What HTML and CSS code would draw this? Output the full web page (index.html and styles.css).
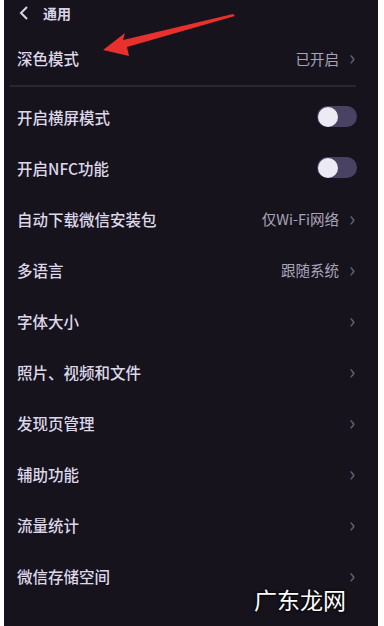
FILE: index.html
```html
<!DOCTYPE html>
<html lang="zh">
<head>
<meta charset="utf-8">
<link rel="stylesheet" href="styles.css">
</head>
<body>
<div class="screen">
  <div class="header">
    <svg class="back" width="10" height="14" viewBox="0 0 10 14"><path d="M8 1 L2 7 L8 13" fill="none" stroke="#d9d5e6" stroke-width="2"/></svg>
    <span class="title">通用</span>
  </div>
  <div class="row first">
    <span class="label">深色模式</span>
    <span class="value">已开启</span>
    <span class="chev">›</span>
  </div>
  <div class="sep"></div>
  <div class="row">
    <span class="label">开启横屏模式</span>
    <span class="toggle"><span class="knob"></span></span>
  </div>
  <div class="row">
    <span class="label">开启NFC功能</span>
    <span class="toggle"><span class="knob"></span></span>
  </div>
  <div class="row">
    <span class="label">自动下载微信安装包</span>
    <span class="value">仅Wi-Fi网络</span>
    <span class="chev">›</span>
  </div>
  <div class="row">
    <span class="label">多语言</span>
    <span class="value">跟随系统</span>
    <span class="chev">›</span>
  </div>
  <div class="row">
    <span class="label">字体大小</span>
    <span class="chev">›</span>
  </div>
  <div class="row">
    <span class="label">照片、视频和文件</span>
    <span class="chev">›</span>
  </div>
  <div class="row">
    <span class="label">发现页管理</span>
    <span class="chev">›</span>
  </div>
  <div class="row">
    <span class="label">辅助功能</span>
    <span class="chev">›</span>
  </div>
  <div class="row">
    <span class="label">流量统计</span>
    <span class="chev">›</span>
  </div>
  <div class="row">
    <span class="label">微信存储空间</span>
    <span class="chev">›</span>
  </div>
  <svg class="arrow" width="140" height="50" viewBox="0 0 140 50"><polygon points="0,36 22,19 20,26 130,0 132,2 24,33 26,42" fill="#e8302c"/></svg>
  <div class="watermark">广东龙网</div>
</div>
</body>
</html>
```
FILE: styles.css
```css
html, body {
  margin: 0;
  padding: 0;
  background: #ffffff;
}
body {
  font-family: "Noto Sans CJK SC", "Noto Sans", sans-serif;
}
.screen {
  position: relative;
  margin: 0 6px 0 4px;
  height: 626px;
  background: #17131d;
  overflow: hidden;
}
.header {
  height: 26px;
  display: flex;
  align-items: center;
  padding-left: 15px;
  gap: 14px;
  margin-bottom: 6px;
}
.back {
  display: block;
}
.title {
  color: #d9d5e6;
  font-size: 14px;
  font-weight: 700;
}
.row {
  height: 51px;
  display: flex;
  align-items: center;
  padding: 0 21px 0 13px;
}
.row.first {
  height: 52px;
}
.label {
  flex: 1;
  color: #dcd8ea;
  font-size: 15.5px;
  font-weight: 500;
}
.value {
  color: #a9a4b9;
  font-size: 14.5px;
  margin-right: 10px;
}
.chev {
  color: #6b667c;
  font-size: 21px;
  line-height: 1;
  margin-top: -3px;
  width: 8px;
}
.sep {
  height: 6px;
  margin: 1px 22px 0 6px;
  border-top: 2px solid #2b2732;
  box-sizing: border-box;
}
.toggle {
  width: 40px;
  height: 21px;
  border-radius: 11px;
  background: #4a4262;
  display: flex;
  align-items: center;
  padding-left: 1px;
  box-sizing: border-box;
}
.knob {
  width: 20px;
  height: 20px;
  border-radius: 50%;
  background: #ecebf4;
}
.arrow {
  position: absolute;
  left: 99px;
  top: 14px;
}
.watermark {
  position: absolute;
  left: 250px;
  top: 582px;
  font-size: 23px;
  font-weight: 400;
  color: #ffffff;
  text-shadow: 0 0 3px #000, 0 0 2px #000;
}
```
